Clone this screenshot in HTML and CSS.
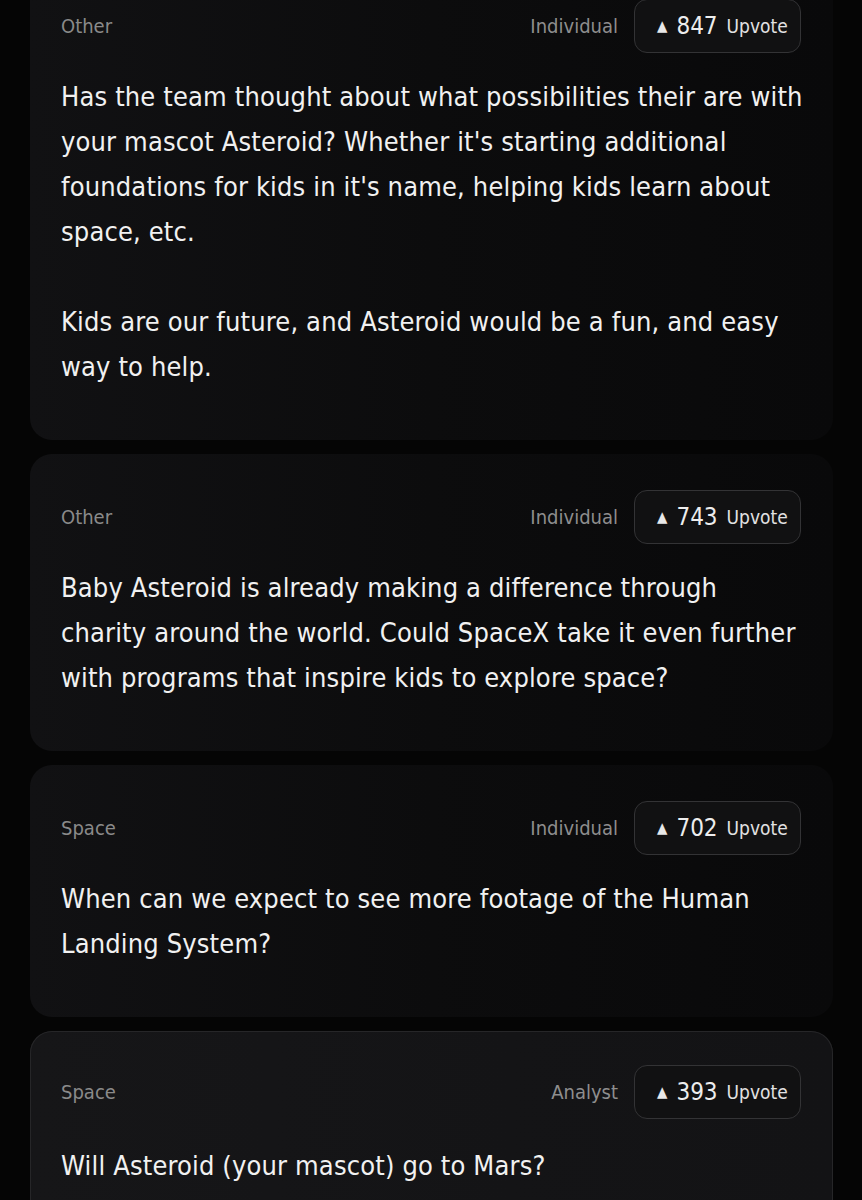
FILE: index.html
```html
<!DOCTYPE html>
<html lang="en">
<head>
<meta charset="utf-8">
<title>Questions</title>
<link rel="stylesheet" href="styles.css">
</head>
<body>
<div class="frame">
  <div class="list">
    <article class="card card-first">
      <header class="card-head">
        <span class="category">Other</span>
        <div class="meta">
          <span class="role">Individual</span>
          <button class="vote"><span class="tri">&#9650;</span><span class="count">847</span><span class="vlabel">Upvote</span></button>
        </div>
      </header>
      <p class="question">Has the team thought about what possibilities their are with your mascot Asteroid? Whether it's starting additional foundations for kids in it's name, helping kids learn about space, etc.<br><br>Kids are our future, and Asteroid would be a fun, and easy way to help.</p>
    </article>
    <article class="card">
      <header class="card-head">
        <span class="category">Other</span>
        <div class="meta">
          <span class="role">Individual</span>
          <button class="vote"><span class="tri">&#9650;</span><span class="count">743</span><span class="vlabel">Upvote</span></button>
        </div>
      </header>
      <p class="question">Baby Asteroid is already making a difference through charity around the world. Could SpaceX take it even further with programs that inspire kids to explore space?</p>
    </article>
    <article class="card">
      <header class="card-head">
        <span class="category">Space</span>
        <div class="meta">
          <span class="role">Individual</span>
          <button class="vote"><span class="tri">&#9650;</span><span class="count">702</span><span class="vlabel">Upvote</span></button>
        </div>
      </header>
      <p class="question">When can we expect to see more footage of the Human Landing System?</p>
    </article>
    <article class="card card-active">
      <header class="card-head">
        <span class="category">Space</span>
        <div class="meta">
          <span class="role">Analyst</span>
          <button class="vote"><span class="tri">&#9650;</span><span class="count">393</span><span class="vlabel">Upvote</span></button>
        </div>
      </header>
      <p class="question">Will Asteroid (your mascot) go to Mars?</p>
    </article>
  </div>
</div>
</body>
</html>
```
FILE: styles.css
```css
html, body {
  margin: 0;
  padding: 0;
  background: #050505;
}
body {
  font-family: "DejaVu Sans Condensed", "DejaVu Sans", sans-serif;
  color: #f1f1f1;
  height: 1200px;
  overflow: hidden;
}
.frame {
  width: 862px;
}
.list {
  margin-top: -37px;
  padding-left: 30px;
  width: 803px;
  display: flex;
  flex-direction: column;
  gap: 14px;
}
.card {
  border-radius: 22px;
  background: linear-gradient(90deg, #111113 0%, #0c0c0d 50%, #09090a 100%);
  padding: 36px 32px 51px 31px;
}
.card-active {
  background: linear-gradient(90deg, #161618 0%, #141416 60%, #131315 100%);
  box-shadow: inset 0 0 0 1px #262628;
  padding-top: 34px;
}
.card-head {
  display: flex;
  align-items: center;
  justify-content: space-between;
  height: 54px;
}
.category {
  font-size: 20px;
  color: #8a8a8a;
}
.meta {
  display: flex;
  align-items: center;
  gap: 16px;
}
.role {
  font-size: 20px;
  color: #8e8e8e;
}
.vote {
  display: flex;
  align-items: center;
  height: 54px;
  width: 167px;
  box-sizing: border-box;
  padding: 0 0 0 22px;
  border-radius: 13px;
  border: 1.5px solid #333335;
  background: #111112;
  color: #ededed;
  font-family: inherit;
}
.tri {
  font-size: 15px;
  margin-right: 9px;
  color: #e8e8e8;
}
.count {
  font-size: 24px;
  margin-right: 9px;
}
.vlabel {
  font-size: 19px;
  color: #e2e2e2;
}
.question {
  margin: 21px -2px 0 0;
  font-size: 27px;
  line-height: 45px;
  letter-spacing: 0.15px;
}
.card-active .question {
  margin-top: 24px;
}
```
